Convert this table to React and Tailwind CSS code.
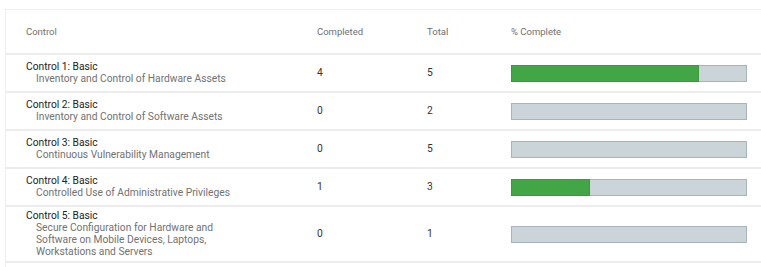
import React from "react";

const rows = [
  { t: "Control 1: Basic", s: "Inventory and Control of Hardware Assets", c: 4, n: 5 },
  { t: "Control 2: Basic", s: "Inventory and Control of Software Assets", c: 0, n: 2 },
  { t: "Control 3: Basic", s: "Continuous Vulnerability Management", c: 0, n: 5 },
  { t: "Control 4: Basic", s: "Controlled Use of Administrative Privileges", c: 1, n: 3 },
  { t: "Control 5: Basic", s: "Secure Configuration for Hardware and Software on Mobile Devices, Laptops, Workstations and Servers", c: 0, n: 1 },
  { t: "Control 6: Basic", s: "Maintenance, Monitoring and Analysis of Audit Logs", c: 0, n: 3 },
];

function Bar({ pct }) {
  return (
    <div className="relative h-[17px] w-[236px] border border-[#a8b4bb] bg-[#cbd4d9]">
      {pct > 0 && (
        <div
          className="absolute left-[-1px] top-[-1px] bottom-[-1px] border border-[#3a9a3f] bg-[#43a646]"
          style={{ width: `calc(${pct}% + 1px)` }}
        />
      )}
    </div>
  );
}

export default function App() {
  return (
    <div className="h-[267px] w-[761px] overflow-hidden bg-white font-['Roboto',sans-serif] text-[10.25px] leading-[12px]">
      <div className="ml-[5px] mt-[9px] border-l border-t border-[#efefef]">
        <div className="grid h-[45px] grid-cols-[291px_110px_84px_1fr] items-center border-b-2 border-[#ececec] pl-[20px] text-[9.5px] text-[#6f6f6f]">
          <div>Control</div>
          <div>Completed</div>
          <div>Total</div>
          <div>% Complete</div>
        </div>
        {rows.map((r, i) => (
          <div
            key={i}
            className="grid min-h-[38px] grid-cols-[291px_110px_84px_1fr] items-center border-b-2 border-[#ececec] py-[3px] pl-[20px]"
          >
            <div>
              <div className="text-[#222222]">{r.t}</div>
              <div className="max-w-[205px] pl-[10px] text-[#727272]">{r.s}</div>
            </div>
            <div className="text-[#333333]">{r.c}</div>
            <div className="text-[#333333]">{r.n}</div>
            <div>
              <Bar pct={(r.c / r.n) * 100} />
            </div>
          </div>
        ))}
      </div>
    </div>
  );
}
